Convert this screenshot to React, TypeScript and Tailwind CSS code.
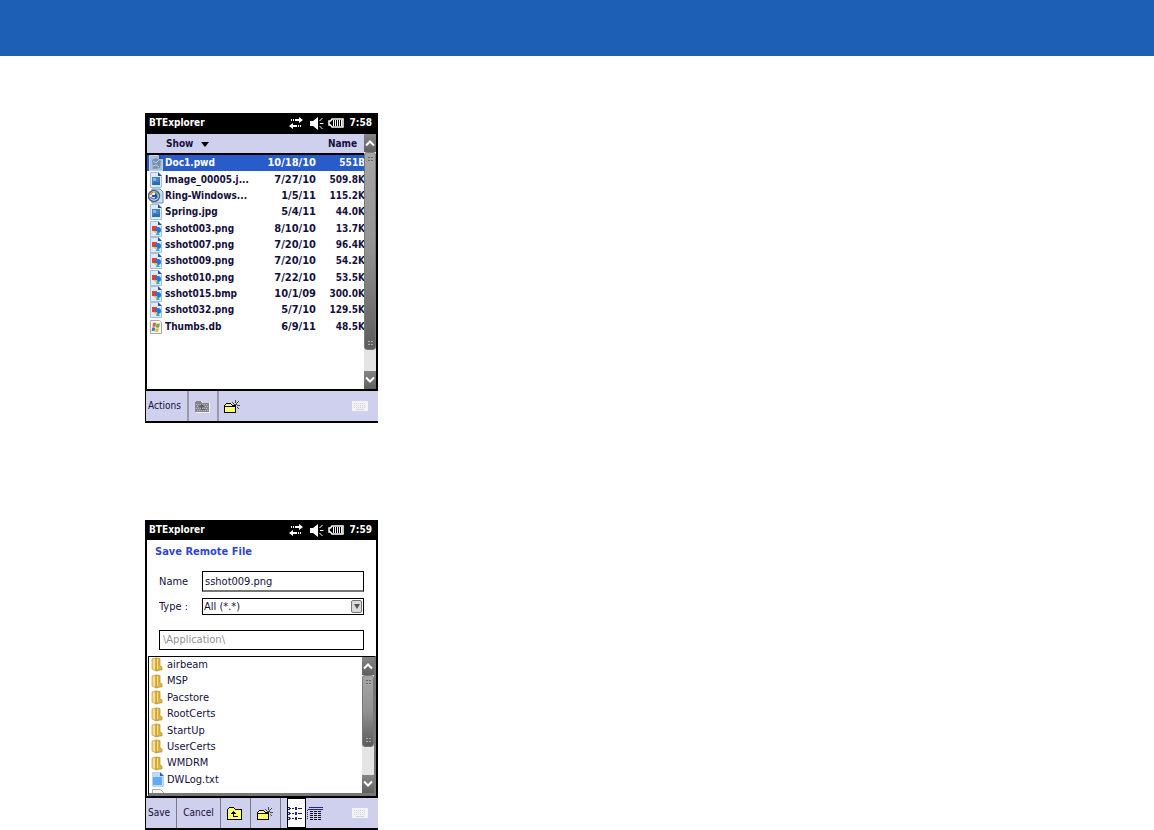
import { ReactNode } from "react";

type FileKind = "pwd" | "jpg" | "wav" | "image" | "db";

const remoteFiles: { name: string; date: string; size: string; kind: FileKind }[] = [
  { name: "Doc1.pwd", date: "10/18/10", size: "551B", kind: "pwd" },
  { name: "Image_00005.j...", date: "7/27/10", size: "509.8K", kind: "jpg" },
  { name: "Ring-Windows...", date: "1/5/11", size: "115.2K", kind: "wav" },
  { name: "Spring.jpg", date: "5/4/11", size: "44.0K", kind: "jpg" },
  { name: "sshot003.png", date: "8/10/10", size: "13.7K", kind: "image" },
  { name: "sshot007.png", date: "7/20/10", size: "96.4K", kind: "image" },
  { name: "sshot009.png", date: "7/20/10", size: "54.2K", kind: "image" },
  { name: "sshot010.png", date: "7/22/10", size: "53.5K", kind: "image" },
  { name: "sshot015.bmp", date: "10/1/09", size: "300.0K", kind: "image" },
  { name: "sshot032.png", date: "5/7/10", size: "129.5K", kind: "image" },
  { name: "Thumbs.db", date: "6/9/11", size: "48.5K", kind: "db" },
];

const folders = ["airbeam", "MSP", "Pacstore", "RootCerts", "StartUp", "UserCerts", "WMDRM"];

function FileIcon({ kind }: { kind: FileKind }) {
  if (kind === "wav") {
    return (
      <svg width="16" height="16" viewBox="0 0 16 16" className="shrink-0">
        <path d="M4 1h8l3 3v11H4z" fill="#c9dcf5" stroke="#6f8fc0" />
        <circle cx="6" cy="8" r="5.5" fill="#e9eef2" stroke="#54657c" strokeWidth="1.5" />
        <path d="M2.5 7a4 4 0 0 1 3-3" stroke="#e0803a" strokeWidth="1.5" fill="none" />
        <path d="M6.5 4a4 4 0 0 1 3 3" stroke="#5fa84a" strokeWidth="1.5" fill="none" />
        <path d="M2.5 9a4 4 0 0 0 7 0" stroke="#3b78d0" strokeWidth="1.5" fill="none" />
        <path d="M4 7h3V5l3 3-3 3V9H4z" fill="#1d4fa8" />
      </svg>
    );
  }
  if (kind === "db") {
    return (
      <svg width="16" height="16" viewBox="0 0 16 16" className="shrink-0">
        <path d="M2.5 1.5h9l2 2v11h-11z" fill="#f5f5f1" stroke="#aaaaa6" />
        <path d="M5 4q2-1 3 0l-.6 4q-1.5-1-3 0z" fill="#e4622c" />
        <path d="M8.5 4.2q1.5 1 3.5 0l-.8 4q-1.5 1-3.3 0z" fill="#77ad48" />
        <path d="M4.2 8.8q1.6-1 3 0l-.6 3.5q-1.5-1-3 0z" fill="#3f79cb" />
        <path d="M7.7 9q1.5 1 3.3 0l-.8 3.5q-1.5 1-3 0z" fill="#f0b83c" />
      </svg>
    );
  }
  const isPwd = kind === "pwd";
  return (
    <svg width="16" height="16" viewBox="0 0 16 16" className="shrink-0">
      <path
        d={isPwd ? "M1.5.5h9l4 4v11h-13z" : "M2.5.5h7l4 4v11h-11z"}
        fill={isPwd ? "#a9bfdd" : "#dcecfb"}
        stroke={isPwd ? "#c3d1e6" : "#a4bddd"}
      />
      <path d={isPwd ? "M11 0l4 4h-4z" : "M10 0l4 4h-4z"} fill="#274f9b" />
      {isPwd && (
        <>
          <path d="M4 5l4-2 5 3-1 7-7 1z" fill="#7690ae" />
          <path d="M5 6l3 2 3-3M5 11l3-1 3 2" stroke="#bcd0e6" fill="none" />
        </>
      )}
      {kind === "jpg" && (
        <>
          <rect x="4" y="5" width="8" height="8" fill="#3d82c9" />
          <rect x="5" y="6" width="3" height="3" fill="#7cb8e6" />
          <path d="M4 13l3-4 2 2 3-2v4z" fill="#2c6dac" />
          <rect x="8" y="7" width="2" height="2" fill="#9a7180" />
        </>
      )}
      {kind === "image" && (
        <>
          <rect x="4" y="5" width="5" height="5" fill="#ee3a2a" />
          <circle cx="10" cy="9" r="3" fill="#1f78e0" />
          <path d="M9 10l3 4H8z" fill="#35a6d9" />
          <path d="M5 10h4v3z" fill="#f0c047" />
        </>
      )}
    </svg>
  );
}

function FolderIcon() {
  return (
    <svg width="13" height="15" viewBox="0 0 13 15" className="shrink-0">
      <path d="M1 2l4-1v13l-4-2z" fill="#f0d069" stroke="#c4a144" strokeWidth=".7" />
      <path d="M5 1l4 .5V9l2 1v3H9l-4 1z" fill="#dcb44b" stroke="#b28c35" strokeWidth=".7" />
      <path d="M3 2.500v9.500" stroke="#fff0a8" />
      <path d="M6.5 2v10" stroke="#f5df8b" />
    </svg>
  );
}

function TextFileIcon() {
  return (
    <svg width="13" height="15" viewBox="0 0 13 15" className="shrink-0">
      <path d="M1.5.5h7l4 4v10h-11z" fill="#b9dcfa" stroke="#bdd3ea" />
      <path d="M9 0l4 4H9z" fill="#2a63b4" />
      <path d="M2 5h9v8H2z" fill="#62abf0" />
    </svg>
  );
}

function TitleBar({ time }: { time: string }) {
  return (
    <header className="flex h-5 shrink-0 items-center bg-black pr-1.5 pl-1 text-[10px] font-bold text-white">
      <h2 className="grow">BTExplorer</h2>
      <svg width="15" height="12" viewBox="0 0 15 12" className="mr-1.5" fill="#fff">
        <path d="M2 2h1v2H2zM4 2h1v2H4zM6 2h4V0l4 3-4 3V4H6z" />
        <path d="M12 8h-1v2h1zM10 8H9v2h1zM8 8H4V6L0 9l4 3v-2h4z" />
      </svg>
      <svg width="14" height="13" viewBox="0 0 14 13" className="mr-1" fill="#fff">
        <path d="M0 4h3l5-4v13L3 9H0z" />
        <path d="M9.5 4l3-3M10 6.5h3.500M9.5 9l3 3" stroke="#fff" />
      </svg>
      <svg width="16" height="10" viewBox="0 0 16 10" className="mr-1">
        <path d="M15 1v8H4L2.5 7H1V3h1.500L4 1z" fill="#000" stroke="#fff" strokeWidth="1.5" />
        <path d="M5.5 2v6M7.5 2v6M9.5 2v6M11.5 2v6M13.5 2v6" stroke="#fff" />
      </svg>
      <time className="w-6 text-right">{time}</time>
    </header>
  );
}

function ArrowButton({ up }: { up?: boolean }) {
  return (
    <button
      type="button"
      aria-label={up ? "Scroll up" : "Scroll down"}
      className="flex h-[18px] w-full shrink-0 items-center justify-center bg-linear-to-b from-[#858585] to-[#606060]"
    >
      <svg width="10" height="8" viewBox="0 0 10 8" fill="none" stroke="#fff" strokeWidth="2">
        <path d={up ? "M1 6.5l4-4 4 4" : "M1 1.5l4 4 4-4"} />
      </svg>
    </button>
  );
}

function Grip() {
  return (
    <svg width="5" height="5" viewBox="0 0 5 5" shapeRendering="crispEdges">
      <path d="M0 0h2v1H0zM3 0h2v1H3zM0 3h2v1H0zM3 3h2v1H3z" fill="#666" />
      <path d="M0 1h2v1H0zM3 1h2v1H3zM0 4h2v1H0zM3 4h2v1H3z" fill="#aaa" />
    </svg>
  );
}

function ScrollBar({ thumb }: { thumb: string }) {
  return (
    <div className="flex w-3 shrink-0 flex-col bg-[#e4e4e4]">
      <ArrowButton up />
      <div
        className={`flex flex-col items-center justify-between rounded-[3px] border border-[#777] bg-linear-to-b from-[#a6a6a6] via-[#929292] to-[#5c5c5c] py-1 ${thumb}`}
      >
        <Grip />
        <Grip />
      </div>
      <div className="grow" />
      <ArrowButton />
    </div>
  );
}

function NewFolderIcon() {
  return (
    <svg width="16" height="13" viewBox="0 0 16 13" shapeRendering="crispEdges">
      <path d="M0 5h1V4h1V3h5v1h1v1h4v8H0z" fill="#000" />
      <path d="M2 4h5v1h1v1H1V5h1zM1 7h10v5H1z" fill="#ffff6b" />
      <path d="M8 2h1v1H8zM9 3h1v1H9zM11 0h1v3h-1zM14 1h1v1h-1zM13 2h1v1h-1zM12 3h1v2h-1zM10 4h2v1h-2zM13 5h3v1h-3zM13 7h1v1h-1zM14 8h1v1h-1z" fill="#444" />
    </svg>
  );
}

function KeyboardIcon() {
  return (
    <svg width="16" height="10" viewBox="0 0 16 10" shapeRendering="crispEdges">
      <rect width="16" height="10" fill="#f3f3f7" />
      <path d="M2 2.5h12M2 4.5h12M2 6.5h12" stroke="#d2d2de" strokeDasharray="1 1" />
      <path d="M4 8.5h8" stroke="#d2d2de" />
    </svg>
  );
}

function ToolButton({ label, className, children }: { label?: string; className: string; children: ReactNode }) {
  return (
    <button type="button" aria-label={label} className={`flex h-full shrink-0 items-center ${className}`}>
      {children}
    </button>
  );
}

function RemoteExplorer() {
  return (
    <section className="flex h-[310px] w-[233px] flex-col border-b-2 border-black bg-white">
      <TitleBar time="7:58" />
      <div className="flex h-[258px] border-x-2 border-t border-b-2 border-black">
        <div className="min-w-0 grow overflow-hidden">
          <table className="w-[218px] table-fixed border-collapse text-[10px] font-bold">
            <thead className="bg-[#cfcfee]">
              <tr className="h-5 border-b-2 border-black">
                <th scope="col" className="w-[109px] p-0 text-left">
                  <button type="button" className="ml-[19px] flex items-center gap-2">
                    Show
                    <svg width="8" height="5" viewBox="0 0 8 5" className="mt-0.5">
                      <path d="M0 0h8L4 5z" />
                    </svg>
                  </button>
                </th>
                <th scope="col" className="w-[60px] p-0" aria-label="Date" />
                <th scope="col" className="p-0 pr-2 text-right">Name</th>
              </tr>
            </thead>
          </table>
          <table className="h-[180px] w-[218px] table-fixed border-collapse font-bold" aria-label="Remote files">
            <tbody>
              {remoteFiles.map(({ name, date, size, kind }) => (
                <tr key={name} className={kind === "pwd" ? "bg-[#285ccb] text-white" : ""}>
                  <td className="w-[109px] p-0 text-[10px]">
                    <span className="flex items-center gap-px pl-px whitespace-nowrap">
                      <FileIcon kind={kind} />
                      {name}
                    </span>
                  </td>
                  <td className="w-[60px] p-0 text-right">{date}</td>
                  <td className="p-0 text-right text-[10px]">{size}</td>
                </tr>
              ))}
            </tbody>
          </table>
        </div>
        <ScrollBar thumb="h-[198px]" />
      </div>
      <footer className="flex grow items-center border-l border-black bg-[#cfcfee] pr-[10px] text-[10px]">
        <ToolButton className="w-[43px] border-r-2 border-[#999ba8] pl-0.5">Actions</ToolButton>
        <ToolButton label="Up one level" className="w-[30px] justify-center border-r-2 border-[#999ba8] pr-0.5">
          <svg width="16" height="13" viewBox="0 0 16 13" shapeRendering="crispEdges">
            <path d="M2 2h1V1h5v1h1v1h7v10H2z" fill="#f2f2f8" />
            <path d="M1 2h1V1h5v1h1v1h7v9H1z" fill="#85858b" />
            <path d="M2 4.5h12M3 6.5h12M2 8.5h12M3 10.5h12" stroke="#b8b8c0" strokeDasharray="1 1" />
            <path d="M7 4h1v1h1v1h1v1H8v2h3v1H7V7H5V6h1V5h1z" fill="#606068" />
          </svg>
        </ToolButton>
        <ToolButton label="New folder" className="w-[26px] justify-center">
          <NewFolderIcon />
        </ToolButton>
        <ToolButton label="Keyboard" className="ml-auto">
          <KeyboardIcon />
        </ToolButton>
      </footer>
    </section>
  );
}

function SaveRemoteFile() {
  return (
    <section className="flex h-[310px] w-[233px] flex-col border-b-2 border-black bg-white">
      <TitleBar time="7:59" />
      <form className="flex h-[258px] flex-col border-x-2 border-b-2 border-black">
        <h3 className="mt-1 pl-2 font-bold text-[#3047ca]">Save Remote File</h3>
        <div className="mt-[11px] flex items-center px-3">
          <label htmlFor="file-name" className="w-[43px]">Name</label>
          <input
            id="file-name"
            type="text"
            defaultValue="sshot009.png"
            className="h-[21px] min-w-0 grow border border-b-2 border-black border-b-[#777] px-0.5"
          />
        </div>
        <div className="mt-1.5 flex items-center px-3">
          <label htmlFor="file-type" className="w-[43px]">Type :</label>
          <div className="relative flex grow">
            <select id="file-type" className="h-[17px] w-full appearance-none border border-black px-px leading-4">
              <option>All (*.*)</option>
            </select>
            <span className="pointer-events-none absolute top-0.5 right-0.5 flex h-[13px] w-[11px] items-center justify-center rounded-xs border border-[#777] bg-[#dadada]">
              <svg width="6" height="5" viewBox="0 0 6 5">
                <path d="M0 0h6L3 5z" fill="#555" />
              </svg>
            </span>
          </div>
        </div>
        <input
          type="text"
          aria-label="Folder"
          defaultValue="\Application\"
          className="mx-3 mt-[15px] h-[21px] border border-black px-[3px] text-[#8f8f98]"
        />
        <div className="mt-1.5 ml-px flex min-h-0 grow border-t border-r-2 border-b-[3px] border-l border-black border-r-[#777] border-b-[#777]">
          <div className="min-h-0 grow overflow-hidden">
            <ul className="grid h-[148px] auto-rows-fr">
              {folders.map((folder) => (
                <li key={folder} className="flex min-h-0 items-center gap-[3px] pl-0.5">
                  <FolderIcon />
                  {folder}
                </li>
              ))}
              <li className="flex min-h-0 items-center gap-[3px] pl-0.5">
                <TextFileIcon />
                DWLog.txt
              </li>
              <li className="flex min-h-0 items-start pl-0.5">
                <svg width="13" height="15" viewBox="0 0 13 15">
                  <path d="M1.5 1.5h8l3 3v10h-11z" fill="#f5f5f1" stroke="#aaaaa6" />
                </svg>
              </li>
            </ul>
          </div>
          <ScrollBar thumb="h-[72px]" />
        </div>
      </form>
      <footer className="flex grow items-center border-l border-black bg-[#cfcfee] pr-[10px] text-[10px]">
        <ToolButton className="w-[31px] border-r border-[#777984] pl-0.5">Save</ToolButton>
        <ToolButton className="w-11 justify-center border-r border-[#777984]">Cancel</ToolButton>
        <ToolButton label="Up one level" className="w-[30px] justify-center border-r border-[#777984] pr-0.5">
          <svg width="16" height="13" viewBox="0 0 16 13" shapeRendering="crispEdges">
            <path d="M0 2h1V1h1V0h5v1h1v1h7v11H0z" fill="#000" />
            <path d="M2 1h5v1h1v1h6v9H1V2h1z" fill="#ffff70" />
            <path d="M6 4h1v1h1v1h1v1H7v2h4v1H6V7H4V6h1V5h1z" fill="#000" />
          </svg>
        </ToolButton>
        <ToolButton label="New folder" className="w-[30px] justify-center border-r border-[#777984] pr-0.5">
          <NewFolderIcon />
        </ToolButton>
        <ToolButton label="List view" className="ml-1.5 w-[19px] border border-black bg-white">
          <svg width="15" height="13" viewBox="0 0 15 13" shapeRendering="crispEdges">
            <path d="M0 0h2v1H0zM1 1h2v1H1zM0 2h2v1H0zM7 0h2v3H7zM0 5h2v1H0zM1 6h2v1H1zM0 7h2v1H0zM7 5h2v3H7zM0 10h2v1H0zM1 11h2v1H1zM0 12h2v1H0zM7 10h2v3H7z" fill="#2222a0" />
            <path d="M4 1h2v1H4zM10 1h4v1h-4zM4 6h2v1H4zM10 6h4v1h-4zM4 11h2v1H4zM10 11h4v1h-4z" fill="#222" />
          </svg>
        </ToolButton>
        <ToolButton label="Details view" className="pl-px">
          <svg width="16" height="13" viewBox="0 0 16 13" shapeRendering="crispEdges">
            <path d="M2 0h14v1H2zM0 3h1v1H0zM0 5h1v1H0zM0 7h1v1H0zM0 9h1v1H0zM0 11h1v1H0zM1 2h15v1H1z" fill="#2222a0" />
            <path d="M3 4.5h12M3 6.5h12M3 8.5h12M3 10.5h12M3 12.5h12" stroke="#111" strokeDasharray="3 1" />
          </svg>
        </ToolButton>
        <ToolButton label="Keyboard" className="ml-auto">
          <KeyboardIcon />
        </ToolButton>
      </footer>
    </section>
  );
}

export default function App() {
  return (
    <div className="bg-white font-['DejaVu_Sans_Condensed','DejaVu_Sans',sans-serif] text-[11px] leading-4 text-[#15103c]">
      <div className="h-14 bg-[#1e5fb6]" />
      <main className="flex flex-col gap-[97px] pt-[57px] pl-[145px]">
        <RemoteExplorer />
        <SaveRemoteFile />
      </main>
    </div>
  );
}
